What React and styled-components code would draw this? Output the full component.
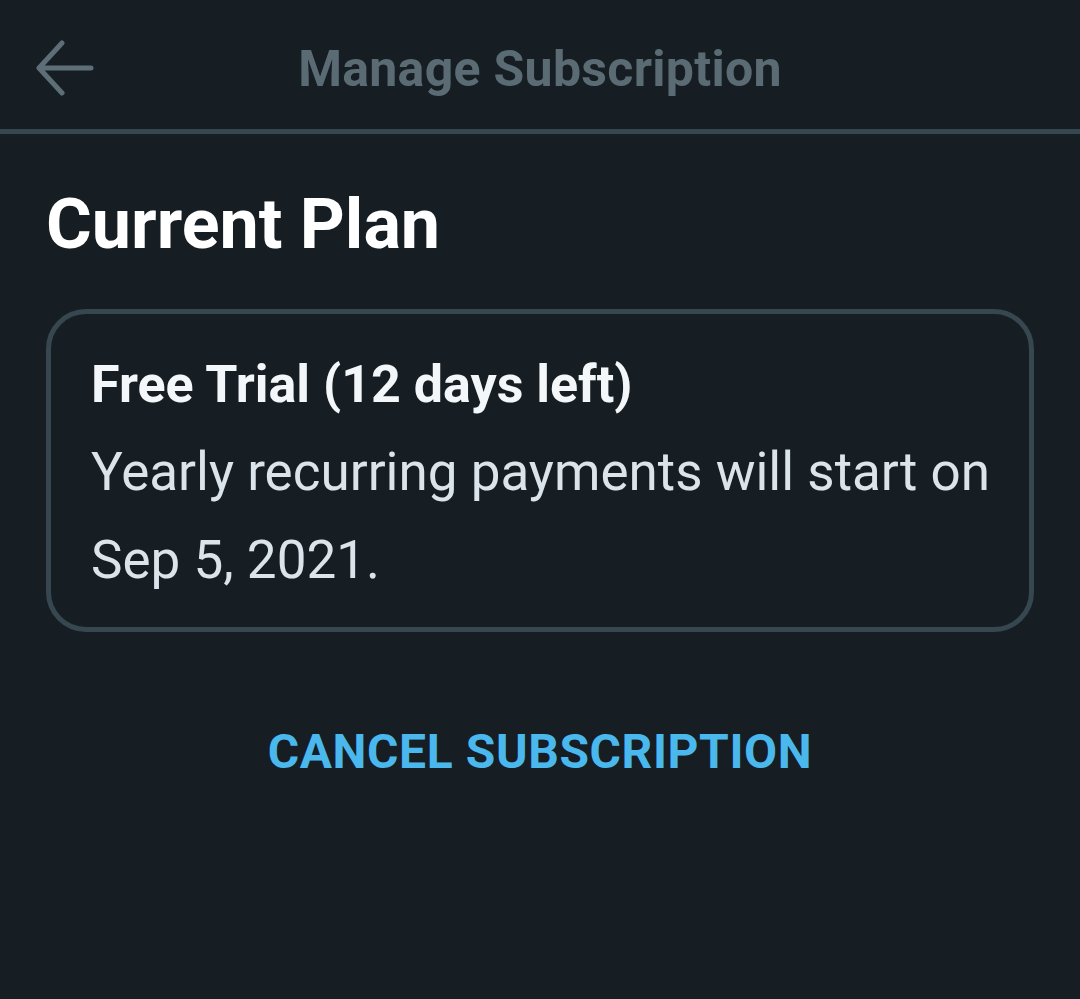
import React from "react";
import styled, { createGlobalStyle } from "styled-components";

const Global = createGlobalStyle`
  html, body { margin: 0; padding: 0; background: #161e23; }
  body { font-family: Roboto, "Noto Sans", sans-serif; }
`;

const Screen = styled.div`
  width: 1080px;
  min-height: 999px;
  background: #161e23;
  display: flex;
  flex-direction: column;
`;

const Header = styled.header`
  box-sizing: border-box;
  height: 134px;
  padding-top: 39px;
  display: grid;
  grid-template-columns: 1fr auto 1fr;
  align-items: start;
  border-bottom: 5px solid #37474f;
`;

const BackButton = styled.button`
  justify-self: start;
  margin-left: 36px;
  width: 58px;
  height: 58px;
  padding: 0;
  border: none;
  background: none;
  display: flex;
  color: #5d6e77;
`;

const Title = styled.h1`
  margin: 0;
  font-size: 50px;
  line-height: 60px;
  font-weight: 700;
  color: #5a6b74;
  letter-spacing: 0.3px;
`;

const Content = styled.main`
  padding: 50px 46px 0 46px;
  display: flex;
  flex-direction: column;
`;

const SectionTitle = styled.h2`
  margin: 0;
  font-size: 70px;
  font-weight: 700;
  color: #ffffff;
  line-height: 80px;
`;

const Card = styled.section`
  margin-top: 45px;
  border: 5px solid #37474f;
  border-radius: 40px;
  padding: 41px 20px 23px 40px;
  display: flex;
  flex-direction: column;
`;

const PlanName = styled.div`
  font-size: 52px;
  font-weight: 700;
  color: #f4f7f9;
  line-height: 60px;
  white-space: nowrap;
`;

const PlanText = styled.p`
  margin: 13px 0 0;
  font-size: 53px;
  font-weight: 400;
  color: #dbe4ea;
  line-height: 88px;
  white-space: nowrap;
`;

const CancelButton = styled.button`
  margin-top: 92px;
  align-self: center;
  background: none;
  border: none;
  padding: 0;
  font-family: inherit;
  font-size: 48px;
  line-height: 56px;
  font-weight: 700;
  letter-spacing: 0.6px;
  color: #4ab8ec;
  text-transform: uppercase;
`;

const ArrowIcon = () => (
  <svg width="58" height="58" viewBox="0 0 58 58" fill="none">
    <path
      d="M55 29H3M26 4L3 29L26 54"
      stroke="currentColor"
      strokeWidth="5"
      strokeLinecap="round"
      strokeLinejoin="round"
    />
  </svg>
);

export default function App() {
  return (
    <Screen>
      <Global />
      <Header>
        <BackButton aria-label="Back">
          <ArrowIcon />
        </BackButton>
        <Title>Manage Subscription</Title>
        <span />
      </Header>
      <Content>
        <SectionTitle>Current Plan</SectionTitle>
        <Card>
          <PlanName>Free Trial (12 days left)</PlanName>
          <PlanText>
            Yearly recurring payments will start on
            <br />
            Sep 5, 2021.
          </PlanText>
        </Card>
        <CancelButton>Cancel Subscription</CancelButton>
      </Content>
    </Screen>
  );
}
